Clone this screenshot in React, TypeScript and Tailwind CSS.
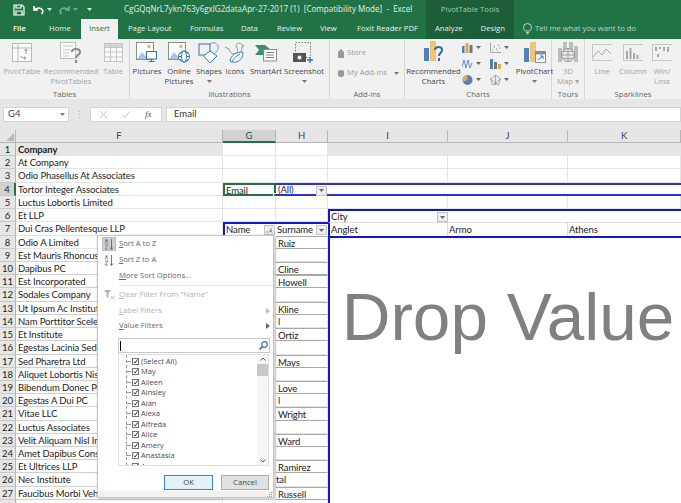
import React from "react";

const Caret = ({ c = "#555" }: { c?: string }) => (
  <svg width="5" height="3" viewBox="0 0 5 3"><path d="M0 0h5L2.5 3z" fill={c} /></svg>
);

const Save = () => (
  <svg width="12" height="12" viewBox="0 0 12 12" fill="none" stroke="#fff" strokeWidth="1.2">
    <path d="M1 1h8l2 2v8H1z" /><path d="M3 1v3h5V1M3 11V7h6v4" />
  </svg>
);
const Undo = ({ c = "#fff" }: { c?: string }) => (
  <svg width="11" height="10" viewBox="0 0 11 10" fill="none" stroke={c} strokeWidth="1.6">
    <path d="M1 1v4h4" /><path d="M1.5 5C3 2.5 8 2 9.5 5c.7 1.6 0 3-1 4" />
  </svg>
);

const PivotI = () => (
  <svg width="20" height="19" viewBox="0 0 20 19" fill="none" stroke="#b9b9b9">
    <rect x=".5" y=".5" width="19" height="18" fill="#fafafa" />
    <path d="M.5 5h19M6 .5v18" />
    <path d="M9 13c0 2 3 2 5 2M14 6v5M12.5 8 14 6l1.500 2M12 13.500l2 1.500-2 1.500" stroke="#9a9a9a" />
  </svg>
);
const RecPivot = () => (
  <svg width="22" height="22" viewBox="0 0 22 22" fill="none">
    <rect x=".5" y=".5" width="15" height="16" fill="#fafafa" stroke="#bdbdbd" />
    <path d="M3 4h10M3 8h7M3 11h6M3 14h6" stroke="#c8c8c8" />
    <path d="M12 10c0-4 8-4 8 0 0 3-4 3-4 6M16 18v3" stroke="#8d8d8d" strokeWidth="2.200" />
  </svg>
);
const TableI = () => (
  <svg width="19" height="19" viewBox="0 0 19 19" fill="#fafafa" stroke="#c4c4c4">
    <rect x=".5" y=".5" width="18" height="18" />
    <rect x=".5" y=".5" width="18" height="4" fill="#d8d8d8" />
    <path d="M.5 9h18M.5 14h18M6.500.5v18M12.500.5v18" fill="none" />
  </svg>
);
const Pic = ({ globe }: { globe?: boolean }) => (
  <svg width="22" height="21" viewBox="0 0 22 21" fill="none">
    <rect x=".5" y=".5" width="17" height="17" fill="#fff" stroke="#8c8c8c" />
    <circle cx="13" cy="4.500" r="1.800" fill="#f0b35a" />
    <path d="M1 17l5-7 3.500 4 2-2 4 5z" fill="#a8c5e3" />
    {globe ? (
      <g stroke="#2e75b6" fill="#fff">
        <circle cx="16" cy="14.500" r="5.500" />
        <path d="M16 9v11M10.500 14.500h11M12 11h8M12 18h8" />
        <ellipse cx="16" cy="14.500" rx="2.500" ry="5.500" />
      </g>
    ) : (
      <g stroke="#2e75b6" fill="#fff">
        <rect x="10.500" y="9.500" width="10" height="7.500" />
        <path d="M15.500 17v2M12.500 19.500h6" />
      </g>
    )}
  </svg>
);
const Shapes = () => (
  <svg width="22" height="22" viewBox="0 0 22 22" fill="none" stroke="#2e75b6">
    <path d="M11 3c2-3 8-3 9 1 1 3-2 7-5 9" stroke="#6d9fd0" />
    <rect x="1" y="2" width="11" height="11" fill="#f1f1f1" />
    <path d="M12 9l7 5-7 7-6.500-7z" fill="#fff" />
  </svg>
);
const IconsI = () => (
  <svg width="22" height="22" viewBox="0 0 22 22" fill="none" strokeWidth=".9">
    <path d="M1 5l4 2c1 4 3 5 6 5 3-1 3-4 2-6l-1-2c0-3 5-4 6-1l2 1-2 1c0 3-1 5-2 6" stroke="#8a8a8a" />
    <path d="M6 19c1-6 6-9 13-9 0 7-4 11-11 10zM8 20c1-3 4-6 8-8" stroke="#2e75b6" fill="#f7fbff" />
  </svg>
);
const SmartArt = () => (
  <svg width="22" height="18" viewBox="0 0 22 18" fill="none">
    <path d="M0 1h10l6 5-6 5H0l4-5z" fill="#3f8f6c" />
    <rect x="8.500" y="5.500" width="13" height="11.500" fill="#fff" stroke="#8c8c8c" />
    <path d="M11 8.500h8M11 11h8M11 13.500h8" stroke="#7d7d7d" />
  </svg>
);
const Screenshot = () => (
  <svg width="22" height="22" viewBox="0 0 22 22" fill="none">
    <rect x="2.500" y=".5" width="15" height="15" stroke="#7f7f7f" strokeDasharray="1.500 1.500" />
    <rect x="0" y="11" width="13" height="9" fill="#555" />
    <circle cx="6.500" cy="15.500" r="2.500" fill="#f1f1f1" stroke="#555" />
    <path d="M17 15v6M14 18h6" stroke="#2e75b6" strokeWidth="1.300" />
  </svg>
);
const Bars = ({ q }: { q?: boolean }) => (
  <svg width="20" height="24" viewBox="0 0 20 24" fill="none">
    <rect x="0" y="7" width="5" height="13" fill="#4f81bd" />
    <rect x="6" y="0" width="6" height="20" fill="#f0c27a" />
    {q ? <path d="M11 9c0-4 7-4 7 0 0 3-3 3-3 6M15 17v3" stroke="#2f6ea6" strokeWidth="2" /> : null}
  </svg>
);
const PivotChart = () => (
  <svg width="22" height="22" viewBox="0 0 22 22" fill="none">
    <rect x="0" y="6" width="5" height="14" fill="#4f81bd" />
    <rect x="6" y="0" width="6" height="20" fill="#f0c27a" />
    <rect x="11.500" y="9.500" width="10" height="11" fill="#fff" stroke="#8c8c8c" />
    <rect x="11.500" y="9.500" width="10" height="3" fill="#8c8c8c" />
    <path d="M14 18l5-4M16 14h3v3" stroke="#2e75b6" />
  </svg>
);
const Small = ({ k }: { k: number }) => (
  <svg width="11" height="10" viewBox="0 0 11 10" fill="none">
    {k === 0 && (<g><rect x="0" y="3" width="2.500" height="7" fill="#4f81bd" /><rect x="3.500" y="0" width="3" height="10" fill="#e3a857" /><rect x="7.500" y="2" width="3" height="8" fill="#777" /></g>)}
    {k === 1 && (<g><path d="M.5 0v9.500H11" stroke="#aaa" /><path d="M2 7h1M4 4h1M6 6h1M8 2h1M9 5h1" stroke="#4f81bd" /><path d="M3 3h1M7 8h1" stroke="#e3a857" /></g>)}
    {k === 2 && (<path d="M0 8l2-7 2 8 2-8 2 8 2-5" stroke="#4f81bd" strokeWidth=".9" />)}
    {k === 3 && (<g><rect x="0" y="0" width="3" height="10" fill="#4f81bd" /><rect x="4" y="3" width="3" height="7" fill="#777" /><rect x="8" y="5" width="3" height="5" fill="#e3a857" /></g>)}
    {k === 4 && (<g><circle cx="5.500" cy="5" r="5" fill="#4f81bd" /><path d="M5.500 5V0A5 5 0 0 0 1 7z" fill="#e3a857" /></g>)}
    {k === 5 && (<path d="M5.500 0l5 4-2 6h-6l-2-6zM5.500 0v10M.5 4l8 6M10.500 4l-8 6" stroke="#8a8a8a" strokeWidth=".7" />)}
  </svg>
);
const MapI = () => (
  <svg width="20" height="22" viewBox="0 0 20 22" fill="none">
    <rect x="0" y="6" width="4" height="14" fill="#bdbdbd" />
    <rect x="5" y="0" width="4" height="12" fill="#bdbdbd" />
    <rect x="11" y="0" width="4" height="12" fill="#bdbdbd" />
    <rect x="16" y="4" width="4" height="16" fill="#bdbdbd" />
    <circle cx="10" cy="13" r="6.500" fill="#e6e6e6" stroke="#8e8e8e" />
    <path d="M3.500 13h13M10 6.500v13M5 9.500h10M5 16.500h10" stroke="#8e8e8e" strokeWidth=".7" />
  </svg>
);
const Spark = ({ k }: { k: number }) => (
  <svg width="20" height="17" viewBox="0 0 20 17" fill="none" stroke="#c6c6c6">
    <path d="M0 .5h20M0 16.500h20" />
    <path d="M.5 0v17" />
    {k === 0 && <path d="M1 13l5-6 4 4 4-6 5 5" stroke="#a8a8a8" />}
    {k === 1 && <path d="M4 15V7M7.500 15V4M11 15V9M14.500 15v-4" stroke="#a8a8a8" strokeWidth="2" />}
    {k === 2 && <path d="M4 3v4M8 3v2M12 3v4M16 3v5M6 10v3" stroke="#a8a8a8" strokeWidth="2" />}
  </svg>
);

const Btn = ({ w, icon, lines, faded, caret }: { w: string; icon: React.ReactNode; lines: string[]; faded?: boolean; caret?: boolean }) => (
  <div className={`${w} flex flex-col items-center shrink-0 whitespace-nowrap ${faded ? "text-[#a3a3a3]" : "text-[#444]"}`}>
    <div className="h-[27px] flex items-center justify-center">{icon}</div>
    {lines.map((l) => (
      <div key={l} className="h-[10px] leading-[10px]">{l}</div>
    ))}
    {caret ? <div className="h-[10px] flex items-center"><Caret c="#777" /></div> : null}
  </div>
);

const Group = ({ w, label, children, last }: { w: string; label: string; children: React.ReactNode; last?: boolean }) => (
  <div className={`${w} shrink-0 h-[60px] flex flex-col justify-between ${last ? "" : "border-r border-[#d5d5d5]"}`}>
    <div className="flex h-[47px]">{children}</div>
    <div className="text-center h-[10px] leading-[10px] text-[#666]">{label}</div>
  </div>
);

const companies = [
  "Company", "At Company", "Odio Phasellus At Associates", "Tortor Integer Associates", "Luctus Lobortis Limited", "Et LLP",
  "Dui Cras Pellentesque LLP", "Odio A Limited", "Est Mauris Rhoncus Associates", "Dapibus PC", "Est Incorporated", "Sodales Company",
  "Ut Ipsum Ac Institute Corp", "Nam Porttitor Scelerisque Inc", "Et Institute", "Egestas Lacinia Sed Limited", "Sed Pharetra Ltd",
  "Aliquet Lobortis Nisi Inc", "Bibendum Donec Pede LLC", "Egestas A Dui PC", "Vitae LLC", "Luctus Associates", "Velit Aliquam Nisl Inc",
  "Amet Dapibus Consulting", "Et Ultrices LLP", "Nec Institute", "Faucibus Morbi Vehicula Ltd", "",
];
const surnames: Record<number, string> = {
  8: "Ruiz", 10: "Cline", 11: "Howell", 13: "Kline", 14: "l", 15: "Ortiz", 17: "Mays", 19: "Love", 20: "l", 21: "Wright", 23: "Ward", 25: "Ramirez", 26: "tal", 27: "Russell",
};
const boxed = new Set([8, 10, 11, 13, 15, 17, 19, 21, 23, 25, 27]);
const checks = ["(Select All)", "May", "Aileen", "Ainsley", "Alan", "Alexa", "Alfreda", "Alice", "Amery", "Anastasia", "A"];

const cell = "min-w-0 whitespace-nowrap leading-[12px] px-[2px] border-r border-b border-[#e4e4e4]";

const FilterBtn = ({ sort }: { sort?: boolean }) => (
  <span className="absolute right-[1px] top-[1px] w-[11px] h-[10px] bg-[#efefef] border border-[#c4c4c4] flex items-center justify-center">
    {sort ? <svg width="7" height="5" viewBox="0 0 7 5"><path d="M0 4h2M3 4.500 4.500 2 6 4.500M5 4V0" stroke="#666" fill="none" strokeWidth=".7" /></svg> : <Caret c="#666" />}
  </span>
);

const Check = () => (
  <span className="w-[7px] h-[7px] border border-[#777] bg-white flex items-center justify-center shrink-0">
    <svg width="7" height="7" viewBox="0 0 7 7"><path d="M1 3.500 3 5.500 6.500.5" stroke="#222" strokeWidth="1.300" fill="none" /></svg>
  </span>
);

const MenuRow = ({ u, rest, faded, arrow, icon, h }: { u: string; rest: string; faded?: boolean; arrow?: boolean; icon?: React.ReactNode; h: string; }) => (
  <div className={`flex items-center ${h} ${faded ? "text-[#b0b0b0]" : "text-[#666]"}`}>
    <div className="w-[21px] flex justify-center shrink-0 pl-[1px]">{icon}</div>
    <span><span className="underline">{u}</span>{rest}</span>
    {arrow ? (
      <svg className="ml-auto mr-[3px]" width="4" height="6" viewBox="0 0 4 6"><path d="M0 0l4 3-4 3z" fill={faded ? "#bbb" : "#666"} /></svg>
    ) : null}
  </div>
);

const SortIcon = ({ up }: { up?: boolean }) => (
  <svg width="10" height="11" viewBox="0 0 10 11" fill="none">
    <path d="M1 1h3M1 4.500 2.500 1 4 4.500" stroke={up ? "#2e75b6" : "#8064a2"} strokeWidth=".8" />
    <path d="M1 6h3L1 10h3" stroke={up ? "#8064a2" : "#2e75b6"} strokeWidth=".8" />
    <path d="M7.500 0v10M6 8.500l1.500 2 1.500-2" stroke="#555" strokeWidth=".8" />
  </svg>
);

export default function App() {
  return (
    <div className="w-[681px] h-[503px] overflow-hidden relative bg-white font-['Open_Sans',sans-serif] text-[7.700px]">
      {/* Title bar */}
      <div className="h-[39px] bg-[#217346] text-white relative flex flex-col">
        <div className="h-[19px] flex items-center relative">
          <div className="ml-[13px] flex items-center"><Save /></div>
          <div className="ml-[8px] flex items-center"><Undo /></div>
          <div className="ml-[3px]"><Caret c="#dfe" /></div>
          <div className="ml-[7px] opacity-40 -scale-x-100"><Undo /></div>
          <div className="ml-[3px] opacity-40"><Caret c="#dfe" /></div>
          <div className="ml-[9px]"><Caret c="#dfe" /></div>
          <div className="ml-[32px] whitespace-pre text-[8.050px] text-[#e4f0e9]">CgGQqNrL7ykn763y6gxlG2dataApr-27-2017 (1)  [Compatibility Mode]  -  Excel</div>
        </div>
        <div className="h-[20px] flex items-center text-[#e6f1ea]">
          <div className="ml-[13px] w-[36px] font-semibold text-white">File</div>
          <div className="w-[32px]">Home</div>
          <div className="w-[37px] h-[20px] bg-[#f1f1f1] text-[#217346] flex items-center justify-center">Insert</div>
          <div className="ml-[10px] w-[62px]">Page Layout</div>
          <div className="w-[51px]">Formulas</div>
          <div className="w-[36px]">Data</div>
          <div className="w-[43px]">Review</div>
          <div className="w-[37px]">View</div>
          <div className="w-[69px] whitespace-nowrap">Foxit Reader PDF</div>
        </div>
        <div className="absolute left-[426px] top-0 w-[88px] h-[39px] bg-[#1b5e38] text-[#e6f1ea] flex flex-col">
          <div className="h-[19px] flex items-center justify-center text-[#a9c9b7]">PivotTable Tools</div>
          <div className="h-[20px] flex items-center justify-between px-[9px]"><span>Analyze</span><span>Design</span></div>
        </div>
        <div className="absolute left-[523px] top-[19px] h-[20px] flex items-center gap-[3px] text-[#bcd6c7]">
          <svg width="9" height="12" viewBox="0 0 9 12" fill="none" stroke="#e6f1ea" strokeWidth=".8"><path d="M2.500 8C1 7 .5 5.500.5 4.500a4 4 0 0 1 8 0C8.500 5.500 8 7 6.500 8zM3 9.500h3M3.500 11h2" /></svg>
          <span className="whitespace-nowrap">Tell me what you want to do</span>
        </div>
      </div>

      {/* Ribbon */}
      <div className="h-[60px] bg-[#f1f1f1] flex">
        <Group w="w-[130px]" label="Tables">
          <Btn w="w-[44px]" faded icon={<PivotI />} lines={["PivotTable"]} />
          <Btn w="w-[54px]" faded icon={<RecPivot />} lines={["Recommended", "PivotTables"]} />
          <Btn w="w-[30px]" faded icon={<TableI />} lines={["Table"]} />
        </Group>
        <Group w="w-[200px]" label="Illustrations">
          <div className="w-[2px]" />
          <Btn w="w-[30px]" icon={<Pic />} lines={["Pictures"]} />
          <Btn w="w-[34px]" icon={<Pic globe />} lines={["Online", "Pictures"]} />
          <Btn w="w-[26px]" icon={<Shapes />} lines={["Shapes"]} caret />
          <Btn w="w-[26px]" icon={<IconsI />} lines={["Icons"]} />
          <Btn w="w-[36px]" icon={<SmartArt />} lines={["SmartArt"]} />
          <Btn w="w-[40px]" icon={<Screenshot />} lines={["Screenshot"]} caret />
        </Group>
        <Group w="w-[75px]" label="Add-ins">
          <div className="pl-[8px] pt-[9px] flex flex-col gap-[10px] text-[#9c9c9c] whitespace-nowrap">
            <div className="flex items-center gap-[3px] h-[10px]">
              <svg width="6" height="9" viewBox="0 0 6 9"><path d="M0 3h6v6H0zM1.500 3c0-3 3-3 3 0" fill="#999" stroke="#999" /></svg>
              <span>Store</span>
            </div>
            <div className="flex items-center gap-[3px] h-[10px]">
              <svg width="6" height="9" viewBox="0 0 6 9"><circle cx="3" cy="4.500" r="3.500" fill="#999" /></svg>
              <span>My Add-ins</span>
              <span className="ml-[4px]"><Caret c="#777" /></span>
            </div>
          </div>
        </Group>
        <Group w="w-[147px]" label="Charts">
          <Btn w="w-[57px]" icon={<Bars q />} lines={["Recommended", "Charts"]} />
          <div className="w-[57px] grid grid-cols-2 gap-y-[5px] pt-[3px] content-start">
            {[0, 1, 2, 3, 4, 5].map((k) => (
              <div key={k} className="flex items-center gap-[3px] h-[11px]"><Small k={k} /><Caret c="#666" /></div>
            ))}
          </div>
          <Btn w="w-[33px]" icon={<PivotChart />} lines={["PivotChart"]} caret />
        </Group>
        <Group w="w-[33px]" label="Tours">
          <Btn w="w-full" faded icon={<MapI />} lines={["3D", "Map ▾"]} />
        </Group>
        <Group w="w-[96px]" label="Sparklines" last>
          <Btn w="w-[34px]" faded icon={<Spark k={0} />} lines={["Line"]} />
          <Btn w="w-[28px]" faded icon={<Spark k={1} />} lines={["Column"]} />
          <Btn w="w-[30px]" faded icon={<Spark k={2} />} lines={["Win/", "Loss"]} />
        </Group>
      </div>

      {/* Formula bar */}
      <div className="h-[31px] bg-[#e6e6e6] pt-[8px] flex items-start text-[9px]">
        <div className="ml-[3px] w-[66px] h-[15px] bg-white border border-[#d4d4d4] flex items-center pl-[4px] pr-[3px] justify-between text-[#444] font-['Lato',sans-serif] text-[9.500px]">
          <span>G4</span><Caret c="#777" />
        </div>
        <div className="w-[21px] h-[15px] flex items-center justify-center text-[#aaa] leading-none">⋮</div>
        <div className="w-[72px] h-[15px] bg-white border border-[#d4d4d4] flex items-center text-[#999]">
          <svg className="ml-[9px]" width="7" height="7" viewBox="0 0 7 7"><path d="M0 0l7 7M7 0 0 7" stroke="#c4c4c4" /></svg>
          <svg className="ml-[15px]" width="8" height="7" viewBox="0 0 8 7"><path d="M.5 4l2 2.500L7.500.5" stroke="#c4c4c4" fill="none" /></svg>
          <span className="ml-[15px] font-['Liberation_Serif',serif] italic text-[#555] text-[9px]">fx</span>
        </div>
        <div className="ml-[4px] flex-1 h-[15px] bg-white border border-[#d4d4d4] flex items-center pl-[7px] text-[#333] font-['Lato',sans-serif] text-[9.500px]">Email</div>
      </div>

      {/* Sheet */}
      <div className="grid grid-cols-[16px_207px_53px_52px_120px_120px_113px] grid-rows-[13px_repeat(28,13.230px)] font-['Lato',sans-serif] text-[9.500px] tracking-[-0.1px] text-[#222]">
        <div className="bg-[#e6e6e6] border-r border-b border-[#b5b5b5] relative overflow-hidden">
          <svg className="absolute right-[1px] bottom-[1px]" width="8" height="8" viewBox="0 0 8 8"><path d="M8 0v8H0z" fill="#b8b8b8" /></svg>
        </div>
        {["F", "G", "H", "I", "J", "K"].map((c) => (
          <div key={c} className={`text-center leading-[12px] border-r ${c === "G" ? "bg-[#d2d2d2] border-b-2 border-b-[#217346] border-r-[#b5b5b5] text-[#1f5c3a]" : "bg-[#e6e6e6] border-b border-[#b5b5b5] text-[#444]"}`}>{c}</div>
        ))}
        {companies.map((name, i) => {
          const r = i + 1;
          return (
            <React.Fragment key={r}>
              <div className={`text-center leading-[13px] text-[#222] border-b border-[#c8c8c8] ${r === 4 ? "bg-[#d2d2d2] border-r-2 border-r-[#217346] text-[#1f5c3a]" : "bg-[#e6e6e6] border-r border-r-[#b5b5b5]"}`}>{r}</div>
              <div className={`${cell} pt-[1px] overflow-hidden ${r === 1 ? "font-bold bg-[#e6e6e6]" : ""} ${r >= 9 ? "border-b-[#d0d0d0]" : ""}`}>{name}</div>
              {r === 4 ? (
                <div className="whitespace-nowrap leading-[11px] px-[1px] border-2 border-[#217346] relative">Email
                  <span className="absolute -right-[3px] -bottom-[3px] w-[4px] h-[4px] bg-[#217346] border border-white" />
                </div>
              ) : r === 7 ? (
                <div className="whitespace-nowrap leading-[12px] px-[1px] border-t-2 border-l-2 border-[#1414c8] relative">Name<FilterBtn sort /></div>
              ) : (
                <div className={cell} />
              )}
              {r === 4 ? (
                <div className="whitespace-nowrap leading-[10px] px-[2px] border-y-2 border-[#2f2fd6] relative">(All)<FilterBtn /></div>
              ) : r === 7 ? (
                <div className="whitespace-nowrap leading-[12px] px-[1px] border-t-2 border-[#1414c8] relative">Surname<FilterBtn /></div>
              ) : (
                <div className={`${cell} pt-[1px] overflow-hidden ${boxed.has(r) ? "border-y border-y-[#a8a8a8]" : ""} ${r === 26 ? "pl-0" : ""}`}>{surnames[r] ?? ""}</div>
              )}
              {r === 1 ? <div className="col-span-3 bg-[#e6e6e6]" /> : null}
              {r === 2 || r === 3 || r === 5 ? (
                <>
                  <div className={cell} /><div className={cell} /><div className={cell} />
                </>
              ) : null}
              {r === 4 ? <div className="col-span-3 border-y-2 border-[#2f2fd6]" /> : null}
              {r === 6 ? (
                <div className="col-span-3 border-l-2 border-t-2 border-[#1414c8] leading-[12px] px-[1px] relative">
                  <div className="w-[118px] relative h-full">City<FilterBtn /></div>
                </div>
              ) : null}
              {r === 7 ? (
                <div className="col-span-3 grid grid-cols-[118px_120px_111px] border-l-2 border-t border-[#1414c8] border-t-[#dcdcdc] leading-[13px]">
                  <div className="px-[1px] border-r border-[#dcdcdc]">Anglet</div>
                  <div className="px-[1px] border-r border-[#dcdcdc]">Armo</div>
                  <div className="px-[1px]">Athens</div>
                </div>
              ) : null}
            </React.Fragment>
          );
        })}
        <div className="col-[5/8] row-[9/30] border-l-2 border-t-2 border-[#1414c8] flex justify-center pl-[5px] pt-[41px] font-['Liberation_Sans',sans-serif] text-[67.500px] tracking-normal leading-[76px] text-[#808080] whitespace-nowrap bg-white">
          Drop Value
        </div>
      </div>

      {/* Filter menu */}
      <div className="absolute left-[97px] top-[235px] w-[177px] h-[263px] bg-white border border-[#c6c6c6] shadow-[1px_1px_3px_rgba(0,0,0,0.25)] font-['Open_Sans',sans-serif] text-[7.700px] flex flex-col">
        <MenuRow h="h-[16px]" u="S" rest="ort A to Z" icon={<span className="w-[14px] h-[14px] bg-[#cfcfcf] border border-[#bbb] flex items-center justify-center"><SortIcon up /></span>} />
        <MenuRow h="h-[16px]" u="S" rest="ort Z to A" icon={<SortIcon />} />
        <MenuRow h="h-[16px]" u="M" rest="ore Sort Options..." />
        <div className="ml-[21px] h-[1px] my-[1px] bg-[#e2e2e2]" />
        <MenuRow h="h-[16px]" faded u="C" rest={'lear Filter From "Name"'} icon={
          <svg width="11" height="10" viewBox="0 0 11 10"><path d="M0 0h7L4.500 3.500V8L2.500 7V3.500z" fill="#b5b5b5" /><path d="M7 6l3 3M10 6 7 9" stroke="#b5b5b5" /></svg>
        } />
        <MenuRow h="h-[15px]" faded u="L" rest="abel Filters" arrow />
        <MenuRow h="h-[16px]" u="V" rest="alue Filters" arrow />
        <div className="ml-[20px] mr-[3px] mt-[4px] h-[15px] border border-[#c8c8c8] flex items-center justify-between px-[1px]">
          <span className="w-[1px] h-[10px] bg-black" />
          <svg width="9" height="9" viewBox="0 0 9 9" fill="none" stroke="#2e75b6" strokeWidth="1.200"><circle cx="5.500" cy="3.500" r="2.800" /><path d="M3.500 5.500 .5 8.500" strokeWidth="1.600" /></svg>
        </div>
        <div className="ml-[20px] mr-[4px] h-[112px] border border-[#e0e0e0] mt-[1px] flex overflow-hidden">
          <div className="flex-1 pl-[7px] pt-[1px] relative overflow-hidden">
            <div className="absolute left-[7px] top-0 bottom-0 border-l border-dashed border-[#999]" />
            {checks.map((c) => (
              <div key={c} className="h-[10.500px] flex items-center gap-[1px] whitespace-nowrap text-[#3b4a63] text-[7.500px] leading-none">
                <span className="w-[5px] border-t border-dashed border-[#999] shrink-0" /><Check /><span className="ml-[1px]">{c}</span>
              </div>
            ))}
          </div>
          <div className="w-[11px] bg-[#f5f5f5] flex flex-col items-center justify-between pt-[2px] pb-[2px] shrink-0">
            <div className="flex flex-col items-center w-full">
              <svg width="6" height="4" viewBox="0 0 6 4"><path d="M.5 3.500 3 1l2.500 2.500" stroke="#555" fill="none" /></svg>
              <div className="w-full h-[12px] mt-[3px] bg-[#c8c8c8]" />
            </div>
            <svg width="6" height="4" viewBox="0 0 6 4"><path d="M.5.500 3 3 5.500.5" stroke="#555" fill="none" /></svg>
          </div>
        </div>
        <div className="flex justify-end gap-[8px] mr-[4px] mt-[9px] text-[#444]">
          <div className="w-[49px] h-[15px] bg-[#e4f1fb] border border-[#2e86d0] flex items-center justify-center">OK</div>
          <div className="w-[48px] h-[15px] bg-[#e1e1e1] border border-[#adadad] flex items-center justify-center">Cancel</div>
        </div>
        <div className="mt-auto h-[6px] bg-[#f1f1f1] flex justify-end items-end pr-[1px]">
          <svg width="5" height="5" viewBox="0 0 5 5"><path d="M4 0h1v1H4zM2 2h1v1H2zM4 2h1v1H4zM0 4h1v1H0zM2 4h1v1H2zM4 4h1v1H4z" fill="#999" /></svg>
        </div>
      </div>
    </div>
  );
}
